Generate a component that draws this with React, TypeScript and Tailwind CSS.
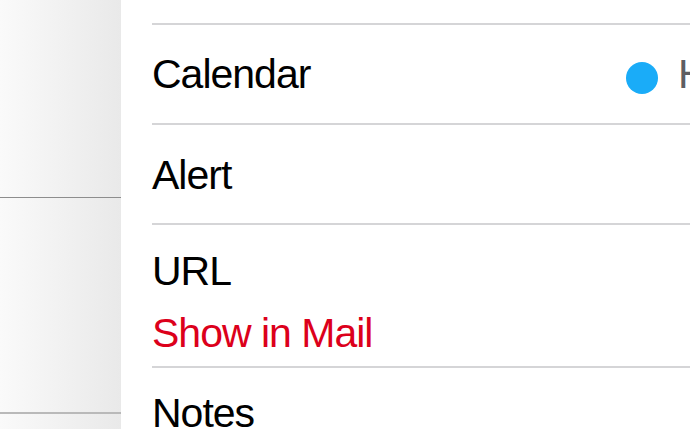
import React from "react";

const font = { fontFamily: '"Liberation Sans", Arial, sans-serif' };

function Line() {
  return <div className="h-[2px] shrink-0 bg-[#d5d5d7]" />;
}

export default function App() {
  return (
    <div className="flex h-[429px] w-[690px] overflow-hidden bg-white" style={font}>
      <div className="flex w-[121px] shrink-0 flex-col bg-gradient-to-r from-[#fafafa] to-[#e9e9e9]">
        <div className="h-[197px] shrink-0" />
        <div className="h-px shrink-0 bg-[#8d8d8d]" />
        <div className="h-[214px] shrink-0" />
        <div className="h-[2px] shrink-0 bg-[#b9b9b9]" />
      </div>
      <div className="flex min-w-0 flex-1 flex-col overflow-hidden pl-[31px] pt-[23px] text-[41px] leading-[47px] tracking-[-1px] text-black">
        <Line />
        <div className="flex h-[98px] shrink-0 items-start pt-[26px]">
          <span className="whitespace-nowrap">Calendar</span>
          <div className="ml-auto flex w-[64px] shrink-0 items-center gap-[20px] whitespace-nowrap pt-[6px]">
            <span className="block h-[32px] w-[32px] shrink-0 rounded-full bg-[#1aacf8]" />
            <span className="text-[#5e5e62] -mt-[6px]">Home</span>
          </div>
        </div>
        <Line />
        <div className="h-[98px] shrink-0 pt-[27px]">
          <span className="whitespace-nowrap">Alert</span>
        </div>
        <Line />
        <div className="h-[141px] shrink-0 pt-[15px] leading-[62px]">
          <div className="whitespace-nowrap">URL</div>
          <div className="whitespace-nowrap text-[#dc001b]">Show in Mail</div>
        </div>
        <Line />
        <div className="shrink-0 pt-[22px]">
          <span className="whitespace-nowrap">Notes</span>
        </div>
      </div>
    </div>
  );
}
